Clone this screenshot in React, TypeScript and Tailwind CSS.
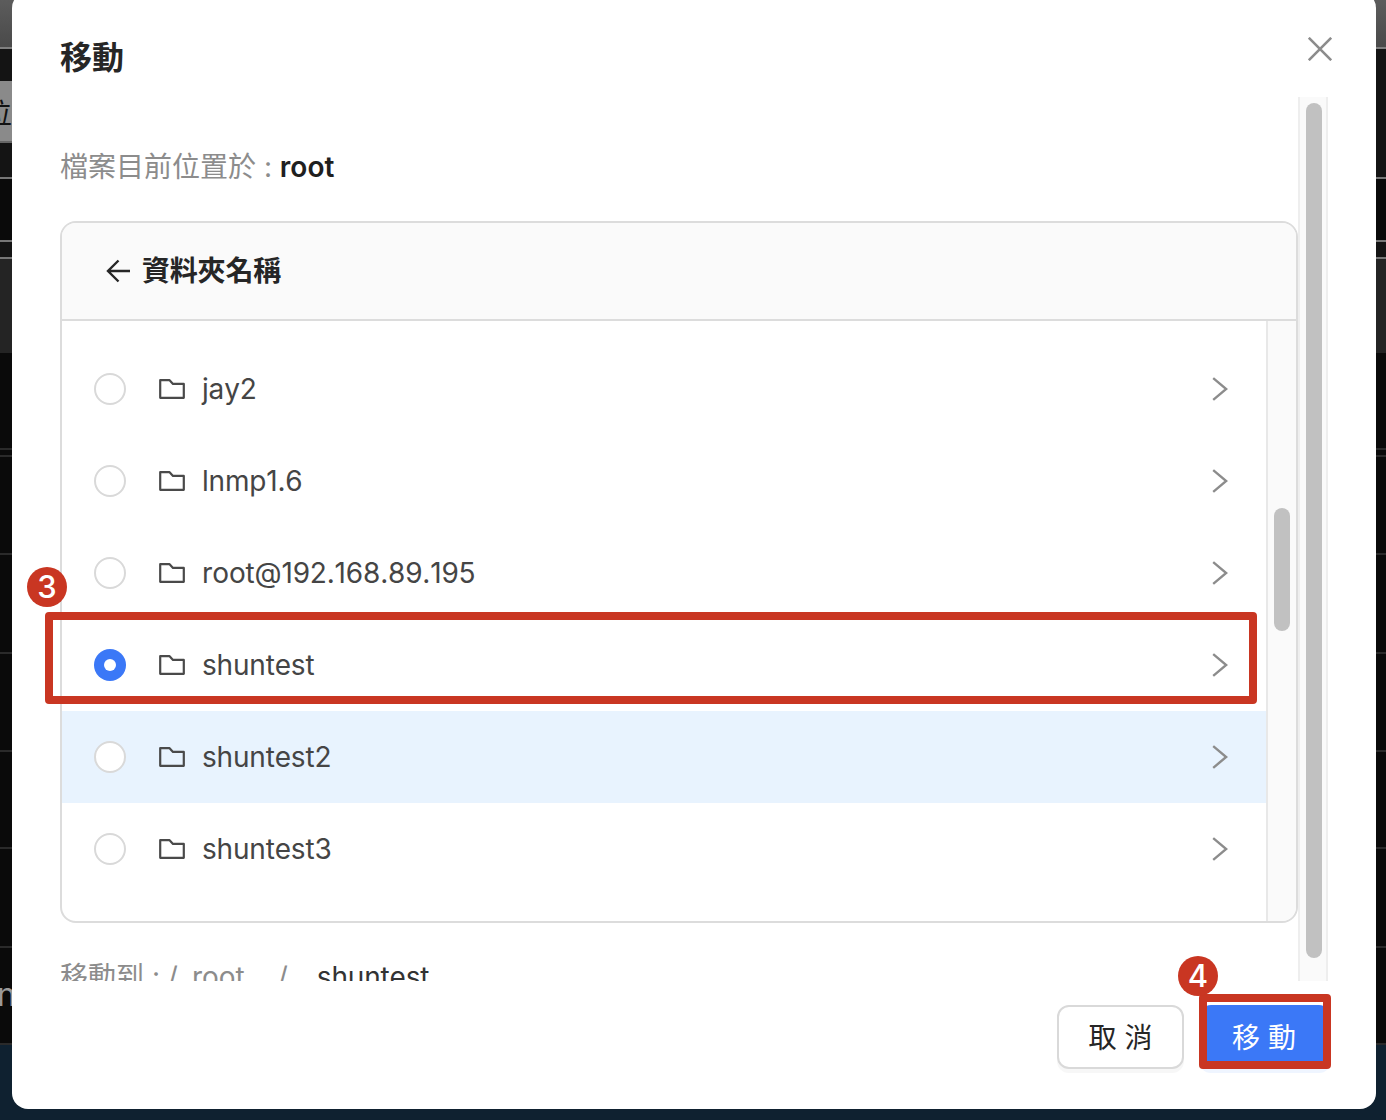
const FOLDERS = ["jay2", "lnmp1.6", "root@192.168.89.195", "shuntest", "shuntest2", "shuntest3"];

const SELECTED = "shuntest";
const HOVERED = "shuntest2";

function FolderIcon() {
  return (
    <svg width="26" height="20" viewBox="0 0 26 20" fill="none" stroke="#4a4a4a" strokeWidth="2.2" className="shrink-0">
      <path d="M1.2 1.2H10.6L14 4.9H24.8V18.8H1.2Z" strokeLinejoin="round" />
    </svg>
  );
}

function Chevron() {
  return (
    <svg width="16" height="24" viewBox="0 0 16 24" fill="none" stroke="#8c8c8c" strokeWidth="2.4" className="shrink-0">
      <path d="M1.2 1.2L14.2 12L1.2 22.8" />
    </svg>
  );
}

function FolderRow({ name }: { name: string }) {
  const selected = name === SELECTED;
  return (
    <div className={`h-[92px] flex items-center pl-8 pr-[38px] ${name === HOVERED ? "bg-[#e8f3fe]" : ""}`}>
      {selected ? (
        <span className="w-8 h-8 rounded-full bg-[#3b78f7] flex items-center justify-center shrink-0">
          <span className="w-3 h-3 rounded-full bg-white" />
        </span>
      ) : (
        <span className="w-8 h-8 rounded-full border-2 border-[#d9d9d9] bg-white shrink-0" />
      )}
      <span className="ml-[33px]"><FolderIcon /></span>
      <span className="ml-[17px] flex-1 text-[28px] leading-10 text-[#454545] [font-kerning:none] tracking-[-0.18px]">{name}</span>
      <Chevron />
    </div>
  );
}

function Badge({ n, className }: { n: number; className: string }) {
  return (
    <div className={`absolute w-10 h-10 rounded-full bg-[#c93622] text-white text-[31px] font-medium leading-10 text-center ${className}`}>
      {n}
    </div>
  );
}

function Backdrop() {
  const lowLines = [95, 5, 96, 97, 96, 95, 97, 95];
  return (
    <div className="h-[1120px] flex flex-col">
      <div className="h-[47px] bg-gradient-to-b from-[#5c5c5c] to-[#4a4a4a]" />
      <div className="h-[2px] bg-[#808080]" />
      <div className="h-[128px] bg-[#141414] pt-8">
        <div className="w-3 h-[62px] bg-[#8a8a8a] overflow-hidden text-[28px] leading-[66px] text-[#111] border-b-2 border-[#666]">
          <span className="block -ml-4 w-8">位</span>
        </div>
      </div>
      <div className="h-[2px] bg-[#777]" />
      <div className="h-[61px] bg-[#0a0a0a]" />
      <div className="h-[2px] bg-[#777]" />
      <div className="h-[15px] bg-[#141414]" />
      <div className="h-[2px] bg-[#777]" />
      <div className="h-[94px] bg-[#242424]" />
      {lowLines.map((h, i) => (
        <div key={i} className="bg-[#0a0a0a] border-b-2 border-[#2a2a2a]" style={{ height: h + 2 }} />
      ))}
      <div className="flex-1 bg-[#0f2130]" />
    </div>
  );
}

export default function App() {
  return (
    <div className="relative h-[1120px] overflow-hidden font-[Inter,'Noto_Sans_CJK_TC',sans-serif]">
      <Backdrop />
      <div className="absolute left-[-3px] top-[975px] text-[32px] leading-10 text-[#999]">n</div>

      {/* Dialog */}
      <div className="absolute left-3 -top-2 w-[1364px] h-[1117px] bg-white rounded-2xl">
        <div className="h-[105px] flex justify-between pl-12 pr-11">
          <h2 className="pt-12 text-[32px] leading-9 font-bold text-[#262626]">移動</h2>
          <svg width="24" height="24" viewBox="0 0 24 24" fill="none" stroke="#8c8c8c" strokeWidth="2.6" className="mt-[45px]">
            <path d="M0.8 0.8L23.2 23.2M23.2 0.8L0.8 23.2" />
          </svg>
        </div>

        <div className="ml-12 w-[1268px] h-[884px] flex overflow-hidden">
          <div className="w-[1238px] shrink-0 pt-[50px]">
            <div className="h-10 text-[28px] leading-10 text-[#8c8c8c]">
              檔案目前位置於 : <span className="font-semibold text-[#1f1f1f]">root</span>
            </div>

            <div className="mt-[34px] w-[1238px] h-[702px] border-2 border-[#dcdcdc] rounded-2xl overflow-hidden">
              <div className="h-[98px] bg-[#fafafa] border-b-2 border-[#dcdcdc] flex items-center pl-[44px]">
                <svg width="24" height="24" viewBox="0 0 24 24" fill="none" stroke="#262626" strokeWidth="2.4">
                  <path d="M24 12H2M12.5 1.5L2 12L12.5 22.5" />
                </svg>
                <span className="ml-3 text-[28px] leading-10 font-bold text-[#262626] tracking-[-0.2px]">資料夾名稱</span>
              </div>
              <div className="flex h-[602px]">
                <div className="flex-1 pt-[22px]">
                  {FOLDERS.map((f) => (
                    <FolderRow key={f} name={f} />
                  ))}
                </div>
                <div className="w-[30px] bg-[#fafafa] border-l-2 border-[#e8e8e8] pl-[6px] pt-[187px]">
                  <div className="w-4 h-[123px] rounded-lg bg-[#c1c1c1]" />
                </div>
              </div>
            </div>

            <div className="mt-[34px] h-10 text-[28px] leading-10 text-[#8c8c8c] flex">
              <span className="whitespace-pre">移動到 : /</span>
              <span className="ml-[14px]">root</span>
              <span className="ml-[33px]">/</span>
              <span className="ml-[29px] text-[#333] [font-kerning:none] tracking-[-0.18px]">shuntest</span>
            </div>
          </div>

          <div className="w-[30px] bg-[#fafafa] border-x-2 border-[#eeeeee] pl-[6px] pt-[6px]">
            <div className="w-4 h-[855px] rounded-lg bg-[#c1c1c1]" />
          </div>
        </div>

        <div className="flex justify-end gap-[15px] pt-6 pr-[45px]">
          <button className="w-[127px] h-[64px] pt-[2px] rounded-xl border-2 border-[#d9d9d9] bg-white text-[28px] text-[#262626] shadow-[0_4px_0_#f7f7f7]">
            取 消
          </button>
          <button className="w-[132px] h-[64px] pt-[2px] pr-[2px] rounded-xl bg-[#3b78f7] text-[28px] text-white shadow-[0_4px_0_#eff5ff]">
            移 動
          </button>
        </div>
      </div>

      {/* Annotations drawn on top of the screenshot */}
      <div className="absolute left-[45px] top-[612px] w-[1212px] h-[92px] border-8 border-[#c93622] rounded-[4px]" />
      <div className="absolute left-[1199px] top-[994px] w-[132px] h-[75px] border-8 border-[#c93622] rounded-[4px]" />
      <Badge n={3} className="left-[27px] top-[567px]" />
      <Badge n={4} className="left-[1178px] top-[956px]" />
    </div>
  );
}
